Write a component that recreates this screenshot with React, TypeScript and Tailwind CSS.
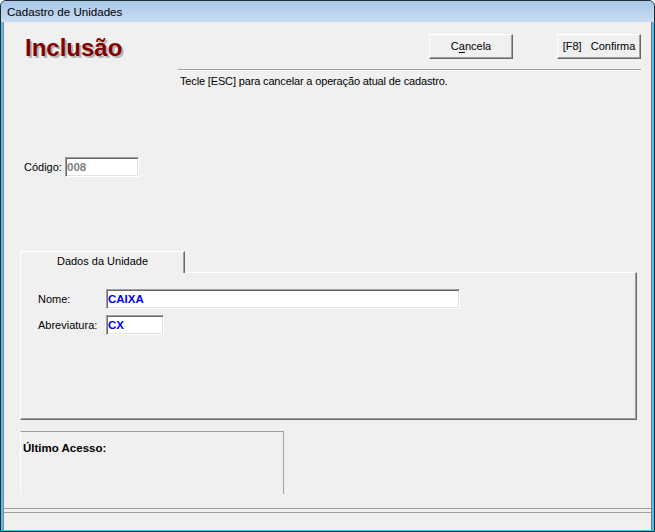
import React from 'react'

const sunken =
  'bg-white border border-t-[#a0a0a0] border-l-[#a0a0a0] border-r-white border-b-white shadow-[inset_1px_1px_0_#696969,inset_-1px_-1px_0_#e3e3e3]'

const raised =
  'bg-[#f0f0f0] border border-t-white border-l-white border-r-[#696969] border-b-[#696969] shadow-[inset_-1px_-1px_0_#a0a0a0]'

function Button({ children }: { children: React.ReactNode }) {
  return (
    <button className={`${raised} w-[84px] h-[25px] flex items-center justify-center text-[11px] leading-[13px] text-black whitespace-pre`}>
      {children}
    </button>
  )
}

function Field({ value, width, color }: { value: string; width: string; color: string }) {
  return (
    <div className={`${sunken} ${width} h-[20px] flex items-center pl-[1px]`}>
      <span className={`text-[11.5px] leading-[14px] font-bold ${color}`}>{value}</span>
    </div>
  )
}

export default function App() {
  return (
    <div className="w-[655px] h-[532px] font-['Liberation_Sans',Arial,sans-serif] text-black">
      <div className="w-full h-full flex flex-col border border-[#1e2b38] rounded-t-[6px] overflow-hidden bg-[#4cc2ec]">
        {/* title bar */}
        <div className="h-[21px] flex items-center pl-[6px] bg-gradient-to-b from-[#a9c7e8] to-[#c9dcf1]">
          <span className="text-[11.6px] leading-[14px]">Cadastro de Unidades</span>
        </div>

        {/* client */}
        <div className="mx-[2px] h-[508px] flex flex-col bg-[#f0f0f0] border-l border-r border-l-[#7d8c9c] border-r-[#7a7a7a]">
          {/* header */}
          <div className="flex">
            <div className="w-[174px] pl-[21px] pt-[14px]">
              <div className="text-[24px] leading-[24px] font-bold text-[#800000] [text-shadow:2px_2px_0_#b4b4b4]">
                Inclusão
              </div>
            </div>
            <div className="w-[463px] pt-[12px]">
              <div className="flex justify-end gap-[44px]">
                <Button>
                  C<span className="underline underline-offset-[2px]">a</span>ncela
                </Button>
                <Button>{'[F8]   Confirma'}</Button>
              </div>
              <div className="mt-[10px] h-[2px] border-t border-t-[#a0a0a0] border-b border-b-white" />
              <div className="mt-[4px] pl-[2px] text-[11px] leading-[13px] tracking-[-0.15px]">
                Tecle [ESC] para cancelar a operação atual de cadastro.
              </div>
            </div>
          </div>

          {/* código */}
          <div className="mt-[69px] flex items-center pl-[20px]">
            <span className="w-[41px] text-[11px] leading-[13px]">Código:</span>
            <Field value="008" width="w-[74px]" color="text-[#808080]" />
          </div>

          {/* tabs */}
          <div className="mt-[74px] ml-[16px] w-[617px]">
            <div className="relative z-10 -mb-px w-[165px] h-[22px] bg-[#f0f0f0] border-l border-t border-r border-l-white border-t-white border-r-[#696969] shadow-[inset_-1px_0_0_#a0a0a0] flex justify-center pt-[3px]">
              <span className="text-[11px] leading-[13px]">Dados da Unidade</span>
            </div>
            <div className="h-[148px] border border-l-white border-t-white border-r-[#696969] border-b-[#696969] shadow-[inset_-1px_-1px_0_#a0a0a0] pt-[16px] pl-[17px]">
              <div className="flex items-center">
                <span className="w-[68px] text-[11px] leading-[13px]">Nome:</span>
                <Field value="CAIXA" width="w-[354px]" color="text-[#0000ff]" />
              </div>
              <div className="mt-[6px] flex items-center">
                <span className="w-[68px] text-[11px] leading-[13px]">Abreviatura:</span>
                <Field value="CX" width="w-[58px]" color="text-[#0000ff]" />
              </div>
            </div>
          </div>

          {/* último acesso */}
          <div className="mt-[11px] ml-[16px] w-[264px] h-[63px] border-t border-r border-l border-t-[#a0a0a0] border-r-[#a0a0a0] border-l-white pt-[3px] pl-[2px]">
            <span className="text-[11.5px] leading-[14px] font-bold">Último Acesso:</span>
          </div>

          {/* status bar */}
          <div className="mt-auto h-[22px] flex flex-col border-t border-t-[#a0a0a0]">
            <div className="mt-[3px] flex-1 border-t border-t-[#a0a0a0]" />
          </div>
        </div>
        <div className="h-[1px]" />
      </div>
    </div>
  )
}
